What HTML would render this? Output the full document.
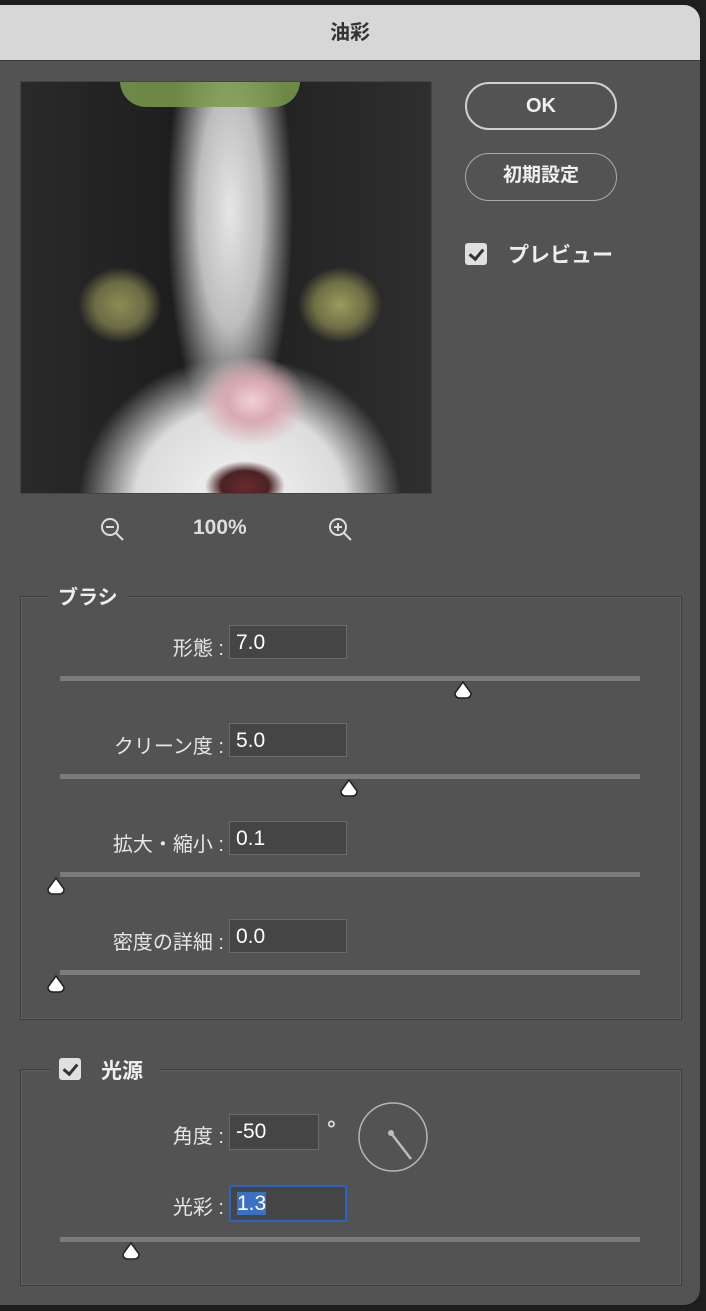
<!DOCTYPE html>
<html><head><meta charset="utf-8"><style>
body{margin:0;width:706px;height:1311px;background:#1e1e1e;font-family:"Liberation Sans","Noto Sans CJK JP",sans-serif;overflow:hidden;position:relative}
.dlg{position:absolute;left:0;top:5px;width:700px;height:1300px;background:#535353;border-radius:0 16px 16px 0;overflow:hidden}
.title{height:55px;background:#d7d7d7;text-align:center;line-height:56px;font-size:20px;font-weight:bold;color:#333;border-bottom:1px solid #3a3a3a}
.a{position:absolute}
.btn{position:absolute;left:465px;width:152px;height:48px;border:2px solid #d0d0d0;border-radius:25px;box-sizing:border-box;color:#f0f0f0;text-align:center;line-height:44px;font-size:20px;font-weight:bold}
.cb{position:absolute;width:22px;height:22px;background:#e0e0e0;border-radius:3px}
.cb:after{content:"";position:absolute;left:7px;top:3px;width:6px;height:11px;border:solid #333;border-width:0 3px 3px 0;transform:rotate(40deg)}
.lbl{position:absolute;color:#e6e6e6;font-size:20px;text-align:right}
.inp{position:absolute;width:118px;height:34px;background:#454545;border:1px solid #6a6a6a;box-sizing:border-box;color:#fff;font-size:21px;line-height:34px;padding-left:6px}
.tr{position:absolute;left:60px;width:580px;height:5px;background:#7b7b7b}
.th{position:absolute;width:20px;height:20px}
.box{position:absolute;left:20px;width:660px;border:1px solid #3c3c3c;box-shadow:inset 0 0 0 1px #606060}
</style></head><body>
<div class="dlg">
<div class="title">油彩</div>
<div class="a" style="left:20px;top:76px;width:412px;height:413px;background:
radial-gradient(ellipse 40px 25px at 225px 405px,#6a2a30 0,#4a2225 60%,transparent 100%),
radial-gradient(ellipse 55px 45px at 232px 320px,#efd0d4 0,#d9a9b0 45%,transparent 100%),
radial-gradient(ellipse 42px 38px at 100px 224px,#8d8c55 0,#6b6b45 60%,transparent 100%),
radial-gradient(ellipse 42px 38px at 320px 224px,#9a9a60 0,#6f6f45 60%,transparent 100%),
radial-gradient(ellipse 190px 170px at 220px 420px,#f4f4f4 0,#dcdcdc 55%,transparent 85%),
radial-gradient(ellipse 70px 260px at 210px 130px,#e6e6e6 0,#bdbdbd 45%,transparent 90%),
linear-gradient(90deg,#2a2a2a,#1d1d1d 40%,#222 60%,#2f2f2f);"></div>
<div class="a" style="left:120px;top:76px;width:180px;height:26px;background:#7a9a4e;opacity:.85;border-radius:0 0 60px 60px"></div>
<div class="a" style="left:20px;top:76px;width:412px;height:413px;border:1px solid #444;box-sizing:border-box"></div>
<svg class="a" style="left:98px;top:510px" width="30" height="30" viewBox="0 0 30 30" fill="none" stroke="#ddd" stroke-width="2"><circle cx="12" cy="12" r="8"/><path d="M8 12h8M18 18l7 7"/></svg>
<div class="a" style="left:193px;top:511px;color:#ddd;font-size:21px;font-weight:bold">100%</div>
<svg class="a" style="left:326px;top:510px" width="30" height="30" viewBox="0 0 30 30" fill="none" stroke="#ddd" stroke-width="2"><circle cx="12" cy="12" r="8"/><path d="M8 12h8M12 8v8M18 18l7 7"/></svg>
<div class="btn" style="top:77px">OK</div>
<div class="btn" style="top:148px;font-size:19px;border-color:#aaa;border-width:1.5px">初期設定</div>
<div class="cb" style="left:465px;top:238px"></div>
<div class="a" style="left:508px;top:234px;color:#eee;font-size:21px;font-weight:bold">プレビュー</div>

<div class="box" style="top:591px;height:422px"></div>
<div class="a" style="left:48px;top:576px;background:#535353;padding:0 10px;color:#eee;font-size:20px;font-weight:bold">ブラシ</div>
<div class="lbl" style="left:60px;width:164px;top:627px">形態 :</div><div class="inp" style="left:229px;top:620px">7.0</div>
<div class="tr" style="top:671px"></div>
<div class="lbl" style="left:60px;width:164px;top:725px">クリーン度 :</div><div class="inp" style="left:229px;top:718px">5.0</div>
<div class="tr" style="top:769px"></div>
<div class="lbl" style="left:60px;width:164px;top:823px">拡大・縮小 :</div><div class="inp" style="left:229px;top:816px">0.1</div>
<div class="tr" style="top:867px"></div>
<div class="lbl" style="left:60px;width:164px;top:921px">密度の詳細 :</div><div class="inp" style="left:229px;top:914px">0.0</div>
<div class="tr" style="top:965px"></div>

<div class="box" style="top:1064px;height:215px"></div>
<div class="a" style="left:50px;top:1048px;width:110px;height:30px;background:#535353"></div>
<div class="cb" style="left:59px;top:1053px"></div>
<div class="a" style="left:101px;top:1050px;color:#eee;font-size:21px;font-weight:bold">光源</div>
<div class="lbl" style="left:60px;width:164px;top:1115px">角度 :</div><div class="inp" style="left:229px;top:1109px;width:90px;height:36px">-50</div>
<div class="a" style="left:327px;top:1111px;color:#ddd;font-size:22px;font-weight:bold">°</div>
<svg class="a" style="left:356px;top:1095px" width="74" height="74"><circle cx="37" cy="37" r="34" fill="none" stroke="#b5b5b5" stroke-width="1.5"/><circle cx="35" cy="33" r="3" fill="#bbb"/><path d="M35 33l20 26" stroke="#bbb" stroke-width="2.5"/></svg>
<div class="lbl" style="left:60px;width:164px;top:1186px">光彩 :</div>
<div class="inp" style="left:229px;top:1180px;height:37px;border:2px solid #2a63c0"><span style="background:#3b70c4">1.3</span></div>
<div class="tr" style="top:1232px"></div>
</div>
<svg class="th" style="left:453px;top:680px" viewBox="0 0 20 20"><path d="M10 2L18 13Q18 18 13 18H7Q2 18 2 13Z" fill="#fff" stroke="#222" stroke-width="1.5"/></svg>
<svg class="th" style="left:339px;top:778px" viewBox="0 0 20 20"><path d="M10 2L18 13Q18 18 13 18H7Q2 18 2 13Z" fill="#fff" stroke="#222" stroke-width="1.5"/></svg>
<svg class="th" style="left:46px;top:876px" viewBox="0 0 20 20"><path d="M10 2L18 13Q18 18 13 18H7Q2 18 2 13Z" fill="#fff" stroke="#222" stroke-width="1.5"/></svg>
<svg class="th" style="left:46px;top:974px" viewBox="0 0 20 20"><path d="M10 2L18 13Q18 18 13 18H7Q2 18 2 13Z" fill="#fff" stroke="#222" stroke-width="1.5"/></svg>
<svg class="th" style="left:121px;top:1241px" viewBox="0 0 20 20"><path d="M10 2L18 13Q18 18 13 18H7Q2 18 2 13Z" fill="#fff" stroke="#222" stroke-width="1.5"/></svg>
</body></html>
